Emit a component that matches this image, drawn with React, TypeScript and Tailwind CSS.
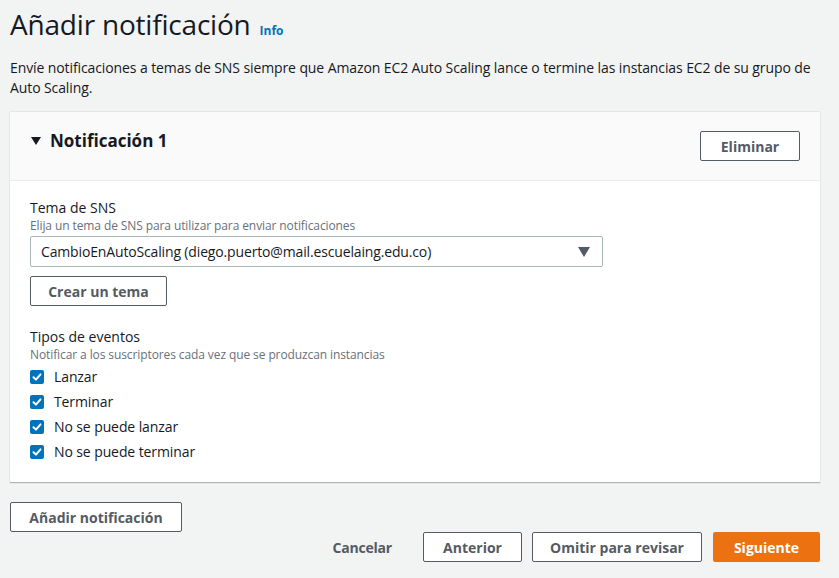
const events = ["Lanzar", "Terminar", "No se puede lanzar", "No se puede terminar"];

function Check() {
  return (
    <span className="flex h-[14px] w-[14px] items-center justify-center rounded-[2px] bg-[#0073bb]">
      <svg viewBox="0 0 14 14" className="h-[14px] w-[14px]">
        <path d="M3.5 7.2 L6 9.6 L10.5 4.4" fill="none" stroke="#fff" strokeWidth="2" strokeLinecap="round" strokeLinejoin="round" />
      </svg>
    </span>
  );
}

function Button({ children, className = "" }: { children: React.ReactNode; className?: string }) {
  return (
    <button
      className={`flex h-[30px] items-center justify-center rounded-[2px] border border-[#545b64] bg-white text-[14px] font-bold text-[#545b64] ${className}`}
    >
      {children}
    </button>
  );
}

export default function App() {
  return (
    <div className="min-h-[578px] bg-[#f2f3f3] pl-[10px] pr-[19px] font-['Open_Sans',sans-serif] text-[#16191f]">
      <div className="flex items-baseline pt-[4px]">
        <h1 className="text-[28px] leading-[40px] tracking-[-0.2px]">Añadir notificación</h1>
        <span className="ml-[9px] text-[12px] font-bold text-[#0073bb]">Info</span>
      </div>
      <p className="mt-[14px] text-[14px] leading-[20px] tracking-[-0.1px] text-[#16191f]">
        Envíe notificaciones a temas de SNS siempre que Amazon EC2 Auto Scaling lance o termine las instancias EC2 de su grupo de Auto Scaling.
      </p>

      <div className="mt-[14px] border-b border-[#aab7b8] bg-white shadow-[0_0_1px_rgba(0,28,36,0.3)]">
        <div className="flex h-[69px] items-center justify-between border-b border-[#eaeded] bg-[#fafafa] pl-[21px] pr-[20px]">
          <div className="flex items-center pb-[10px] text-[17px] font-bold">
            <svg viewBox="0 0 10 8" className="mr-[9px] h-[8px] w-[10px]">
              <path d="M0 0 H10 L5 8 Z" fill="#16191f" />
            </svg>
            Notificación 1
          </div>
          <Button className="w-[100px]">Eliminar</Button>
        </div>
        <div className="px-[20px] pb-[18px] pt-[17px]">
          <div className="text-[14px] leading-[20px]">Tema de SNS</div>
          <div className="text-[12px] leading-[16px] tracking-[-0.1px] text-[#687078]">Elija un tema de SNS para utilizar para enviar notificaciones</div>
          <div className="mt-[2px] flex h-[31px] w-[573px] items-center justify-between rounded-[2px] border border-[#aab7b8] bg-white pl-[10px] pr-[12px] text-[14px] tracking-[-0.15px]">
            <span>CambioEnAutoScaling (diego.puerto@mail.escuelaing.edu.co)</span>
            <svg viewBox="0 0 12 10" className="h-[10px] w-[12px]">
              <path d="M0 0 H12 L6 10 Z" fill="#545b64" />
            </svg>
          </div>
          <Button className="mt-[9px] w-[137px]">Crear un tema</Button>

          <div className="mt-[21px] text-[14px] leading-[20px]">Tipos de eventos</div>
          <div className="text-[12px] leading-[16px] tracking-[-0.1px] text-[#687078]">Notificar a los suscriptores cada vez que se produzcan instancias</div>
          <div className="mt-[1px] flex flex-col">
            {events.map((e) => (
              <label key={e} className="flex h-[25px] items-center gap-[10px] text-[14px] tracking-[-0.1px]">
                <Check />
                {e}
              </label>
            ))}
          </div>
        </div>
      </div>

      <Button className="mt-[19px] w-[172px]">Añadir notificación</Button>

      <div className="flex items-center justify-end">
        <span className="mr-[31px] text-[14px] font-bold tracking-[-0.2px] text-[#545b64]">Cancelar</span>
        <Button className="w-[99px]">Anterior</Button>
        <Button className="ml-[10px] w-[170px]">Omitir para revisar</Button>
        <button className="ml-[11px] flex h-[30px] w-[107px] items-center justify-center rounded-[2px] bg-[#ec7211] text-[14px] font-bold text-white">
          Siguiente
        </button>
      </div>
    </div>
  );
}
